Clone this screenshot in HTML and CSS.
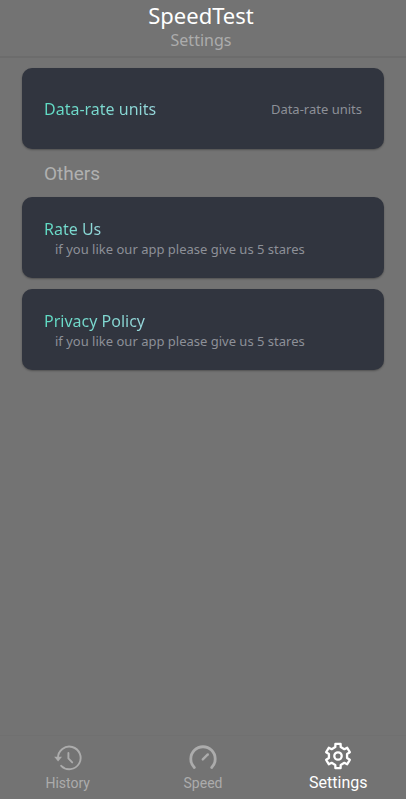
FILE: index.html
```
<!DOCTYPE html>
<html lang="en">

<head>
    <title>SpeedTest</title>
    <meta name="viewport" content="width=device-width, initial-scale=1" charset="UTF-8">
    <link rel="stylesheet" href="styles.css">
</head>

<body>
    <header class="header">
        <h1>SpeedTest</h1>
        <p>Settings</p>
    </header>

    <main class="content">
        <button class="card card-row" type="button">
            <span class="card-title">Data-rate units</span>
            <span class="card-value">Data-rate units</span>
        </button>

        <h2 class="section-title">Others</h2>

        <div class="card-list">
            <a class="card" href="#rate">
                <span class="card-title">Rate Us</span>
                <span class="card-text">if you like our app please give us 5 stares</span>
            </a>
            <a class="card" href="#privacy">
                <span class="card-title">Privacy Policy</span>
                <span class="card-text">if you like our app please give us 5 stares</span>
            </a>
        </div>
    </main>

    <!-- bottom tabs -->
    <nav class="tabs">
        <a class="tab" href="#history">
            <svg class="icon" viewBox="0 0 28 28">
                <path d="M4 15A11.3 11.3 0 1 1 7.2 22.8" fill="none" stroke="currentColor" stroke-width="1.9" stroke-linecap="round" />
                <path d="M.2 13.8h7.8l-3.9 4.6z" fill="currentColor" />
                <path d="M14.4 10v5.4l3.8 4" fill="none" stroke="currentColor" stroke-width="1.9" stroke-linecap="round" stroke-linejoin="round" />
            </svg>
            <span>History</span>
        </a>
        <a class="tab" href="#speed">
            <svg class="icon" viewBox="0 0 28 28">
                <path d="M5.3 24.5A12.2 12.2 0 1 1 22.7 24.5" fill="none" stroke="currentColor" stroke-width="2.8" stroke-linecap="round" />
                <path d="M13.8 16.4l5-5" fill="none" stroke="currentColor" stroke-width="2.4" stroke-linecap="round" />
            </svg>
            <span>Speed</span>
        </a>
        <a class="tab active" href="#settings">
            <svg class="icon" viewBox="0 0 28 28" fill="none" stroke="currentColor" stroke-width="2.3" stroke-linejoin="round">
                <path d="M11.42 1.87h5.16l.14 3.24 3.62 2.09 2.87-1.5 2.58 4.47-2.73 1.74v4.18l2.73 1.74-2.58 4.47-2.87-1.5-3.62 2.09-.14 3.24h-5.16l-.14-3.24-3.62-2.09-2.87 1.5-2.58-4.47 2.73-1.74v-4.18l-2.73-1.74 2.58-4.47 2.87 1.5 3.62-2.09z" />
                <circle cx="14" cy="14" r="3.7" />
            </svg>
            <span>Settings</span>
        </a>
    </nav>
</body>

</html>
```
FILE: styles.css
```
* {
    box-sizing: border-box;
}

body {
    margin: 0;
    min-height: 100vh;
    display: flex;
    flex-direction: column;
    background-color: #737373;
    border-bottom: 1px solid #ffffff;
    font-family: "Noto Sans", "Open Sans", sans-serif;
}

a {
    color: inherit;
    text-decoration: none;
}

.header {
    padding: 0 4px 6px 0;
    border-bottom: 2px solid #6c6c6c;
    text-align: center;
}

.header h1 {
    margin: 0;
    font-size: 22px;
    font-weight: 400;
    line-height: 30px;
    color: #ffffff;
}

.header p {
    margin: 0;
    font-size: 16px;
    line-height: 20px;
    color: #acacac;
}

.content {
    flex: 1;
    padding: 10px 22px;
}

.card {
    display: flex;
    flex-direction: column;
    justify-content: center;
    width: 100%;
    min-height: 81px;
    padding: 20px 22px;
    border: 0;
    border-radius: 10px;
    background-color: #31353f;
    box-shadow: 0 1px 2px rgba(0, 0, 0, 0.3);
    font-family: inherit;
}

.card-row {
    flex-direction: row;
    justify-content: space-between;
    align-items: center;
}

.card-list {
    display: flex;
    flex-direction: column;
    gap: 11px;
}

.card-title {
    align-self: flex-start;
    font-size: 16px;
    line-height: 22px;
    color: transparent;
    background: linear-gradient(to right, #5fdcc4, #98d8dc);
    -webkit-background-clip: text;
    background-clip: text;
}

.card-row .card-title {
    align-self: center;
}

.card-value,
.card-text {
    font-size: 13px;
    line-height: 18px;
    color: #8d9098;
}

.card-text {
    padding-left: 11px;
}

.section-title {
    margin: 0;
    padding: 13px 22px 11px;
    font-family: Roboto, sans-serif;
    font-size: 19px;
    font-weight: 400;
    line-height: 24px;
    color: #b0b0b0;
}

.tabs {
    display: flex;
    padding: 6px 0;
    border-top: 1px solid #707070;
    font-family: Roboto, sans-serif;
}

.tab {
    flex: 1;
    display: flex;
    flex-direction: column;
    align-items: center;
    justify-content: flex-end;
    gap: 2px;
    font-size: 14px;
    line-height: 20px;
    color: #acacac;
}

.tab.active {
    gap: 3px;
    font-size: 16px;
    color: #ffffff;
}

.icon {
    width: 28px;
    height: 28px;
}
```
